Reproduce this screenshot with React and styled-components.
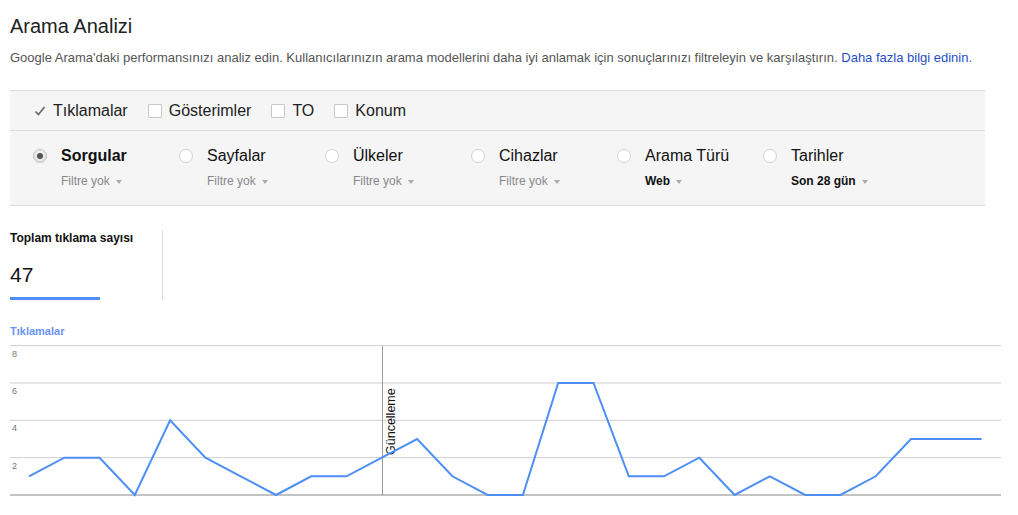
import React from 'react';
import styled, { createGlobalStyle } from 'styled-components';

const GlobalStyle = createGlobalStyle`
  html, body {
    margin: 0;
    padding: 0;
    background: #fff;
  }
  body {
    font-family: "Liberation Sans", Arial, sans-serif;
    color: #222;
  }
`;

const colors = {
  blue: '#4d8ff6',
  link: '#1f4fc7',
  border: '#dcdcdc',
  panel: '#f5f5f5',
  muted: '#888',
};

const Page = styled.div`
  padding: 0 10px;
  width: 1018px;
  box-sizing: border-box;
`;

const Title = styled.h1`
  margin: 0;
  padding-top: 14px;
  font-size: 20px;
  line-height: 24px;
  font-weight: normal;
  color: #222;
`;

const Intro = styled.p`
  margin: 12px 0 0;
  font-size: 13px;
  line-height: 16px;
  color: #555;
  white-space: nowrap;

  a {
    color: ${colors.link};
    text-decoration: none;
  }
`;

const FilterPanel = styled.div`
  margin-top: 24px;
  width: 975px;
  background: ${colors.panel};
  border-top: 1px solid ${colors.border};
  border-bottom: 1px solid ${colors.border};
`;

const MetricRow = styled.div`
  display: flex;
  align-items: center;
  height: 39px;
  padding-left: 24px;
  gap: 20px;
  border-bottom: 1px solid ${colors.border};
`;

const Metric = styled.label`
  display: flex;
  align-items: center;
  gap: 7px;
  font-size: 16px;
  color: #222;
`;

const Box = styled.span`
  width: 12px;
  height: 12px;
  background: #fff;
  border: 1px solid #c8c8c8;
  border-radius: 1px;
`;

const Tick = styled.svg`
  width: 12px;
  height: 12px;
`;

const DimensionRow = styled.div`
  display: flex;
  padding: 15px 0 16px 23px;
`;

const Dimension = styled.div`
  width: 146px;
  display: grid;
  grid-template-columns: 28px auto;
  grid-template-rows: 20px 16px;
  row-gap: 7px;
`;

const Radio = styled.span`
  align-self: center;
  width: 12px;
  height: 12px;
  border-radius: 50%;
  border: 1px solid ${(p) => (p.$on ? '#bdbdbd' : '#d4d4d4')};
  background: ${(p) => (p.$on ? 'linear-gradient(#f0f0f0, #e2e2e2)' : '#fff')};
  display: flex;
  align-items: center;
  justify-content: center;

  &::after {
    content: '';
    display: ${(p) => (p.$on ? 'block' : 'none')};
    width: 6px;
    height: 6px;
    border-radius: 50%;
    background: #555;
  }
`;

const DimLabel = styled.span`
  font-size: 16px;
  line-height: 20px;
  font-weight: ${(p) => (p.$on ? 'bold' : 'normal')};
  color: #111;
`;

const DimFilter = styled.span`
  grid-column: 2;
  display: flex;
  align-items: center;
  gap: 6px;
  font-size: 12px;
  line-height: 16px;
  color: ${(p) => (p.$set ? '#111' : colors.muted)};
  font-weight: ${(p) => (p.$set ? 'bold' : 'normal')};
`;

const Caret = styled.span`
  width: 0;
  height: 0;
  border-left: 3.5px solid transparent;
  border-right: 3.5px solid transparent;
  border-top: 4px solid #aaa;
  margin-top: 1px;
`;

const Stats = styled.div`
  display: flex;
  margin-top: 24px;
`;

const StatCard = styled.div`
  width: 152px;
  height: 70px;
  border-right: 1px solid ${colors.border};
`;

const StatName = styled.div`
  font-size: 12px;
  line-height: 16px;
  font-weight: bold;
  color: #111;
`;

const StatValue = styled.div`
  margin-top: 16px;
  font-size: 21px;
  line-height: 26px;
  color: #111;
`;

const StatBar = styled.div`
  margin-top: 9px;
  width: 90px;
  height: 3px;
  background: ${colors.blue};
`;

const SeriesName = styled.div`
  margin: 24px 0 2px;
  font-size: 11px;
  line-height: 14px;
  font-weight: bold;
  color: #6b93f7;
`;

const ChartSvg = styled.svg`
  display: block;
  overflow: visible;
`;

const metrics = [
  { name: 'Tıklamalar', on: true },
  { name: 'Gösterimler' },
  { name: 'TO' },
  { name: 'Konum' },
];

const dimensions = [
  { name: 'Sorgular', filter: 'Filtre yok', on: true },
  { name: 'Sayfalar', filter: 'Filtre yok' },
  { name: 'Ülkeler', filter: 'Filtre yok' },
  { name: 'Cihazlar', filter: 'Filtre yok' },
  { name: 'Arama Türü', filter: 'Web', set: true },
  { name: 'Tarihler', filter: 'Son 28 gün', set: true },
];

const clicks = [1, 2, 2, 0, 4, 2, 1, 0, 1, 1, 2, 3, 1, 0, 0, 6, 6, 1, 1, 2, 0, 1, 0, 0, 1, 3, 3, 3];

const BASE = 155;
const STEP = 18.67;
const x0 = 19;
const dx = 35.28;

const Chart = () => {
  const points = clicks.map((v, i) => `${(x0 + i * dx).toFixed(1)},${(BASE - v * STEP).toFixed(1)}`).join(' ');
  const grid = [8, 6, 4, 2];
  return (
    <ChartSvg width="998" height="165" viewBox="0 0 998 165">
      {grid.map((v) => {
        const y = BASE - v * STEP;
        return (
          <g key={v}>
            <line x1="0" x2="991" y1={y} y2={y} stroke="#cfcfcf" strokeWidth="1" />
            <text x="2" y={y + 11} fontSize="9" fill="#777" fontFamily="Liberation Sans, Arial, sans-serif">
              {v}
            </text>
          </g>
        );
      })}
      <line x1="372.5" x2="372.5" y1="6" y2={BASE} stroke="#9a9a9a" strokeWidth="1" />
      <text
        transform="translate(385 115) rotate(-90)"
        fontSize="12.5"
        fill="#111"
        fontFamily="Liberation Sans, Arial, sans-serif"
      >
        Güncelleme
      </text>
      <line x1="0" x2="991" y1={BASE} y2={BASE} stroke="#888" strokeWidth="1" />
      <polyline points={points} fill="none" stroke={colors.blue} strokeWidth="2" strokeLinejoin="miter" />
    </ChartSvg>
  );
};

export default function App() {
  return (
    <Page>
      <GlobalStyle />
      <Title>Arama Analizi</Title>
      <Intro>
        Google Arama'daki performansınızı analiz edin. Kullanıcılarınızın arama modellerini daha iyi anlamak için
        sonuçlarınızı filtreleyin ve karşılaştırın. <a href="#">Daha fazla bilgi edinin.</a>
      </Intro>

      <FilterPanel>
        <MetricRow>
          {metrics.map((m) => (
            <Metric key={m.name}>
              {m.on ? (
                <Tick viewBox="0 0 12 12">
                  <path d="M1.5 6.5 L4.5 9.5 L10.5 2" fill="none" stroke="#666" strokeWidth="1.6" />
                </Tick>
              ) : (
                <Box />
              )}
              {m.name}
            </Metric>
          ))}
        </MetricRow>
        <DimensionRow>
          {dimensions.map((d) => (
            <Dimension key={d.name}>
              <Radio $on={d.on} />
              <DimLabel $on={d.on}>{d.name}</DimLabel>
              <DimFilter $set={d.set}>
                {d.filter}
                <Caret />
              </DimFilter>
            </Dimension>
          ))}
        </DimensionRow>
      </FilterPanel>

      <Stats>
        <StatCard>
          <StatName>Toplam tıklama sayısı</StatName>
          <StatValue>47</StatValue>
          <StatBar />
        </StatCard>
      </Stats>

      <SeriesName>Tıklamalar</SeriesName>
      <Chart />
    </Page>
  );
}
